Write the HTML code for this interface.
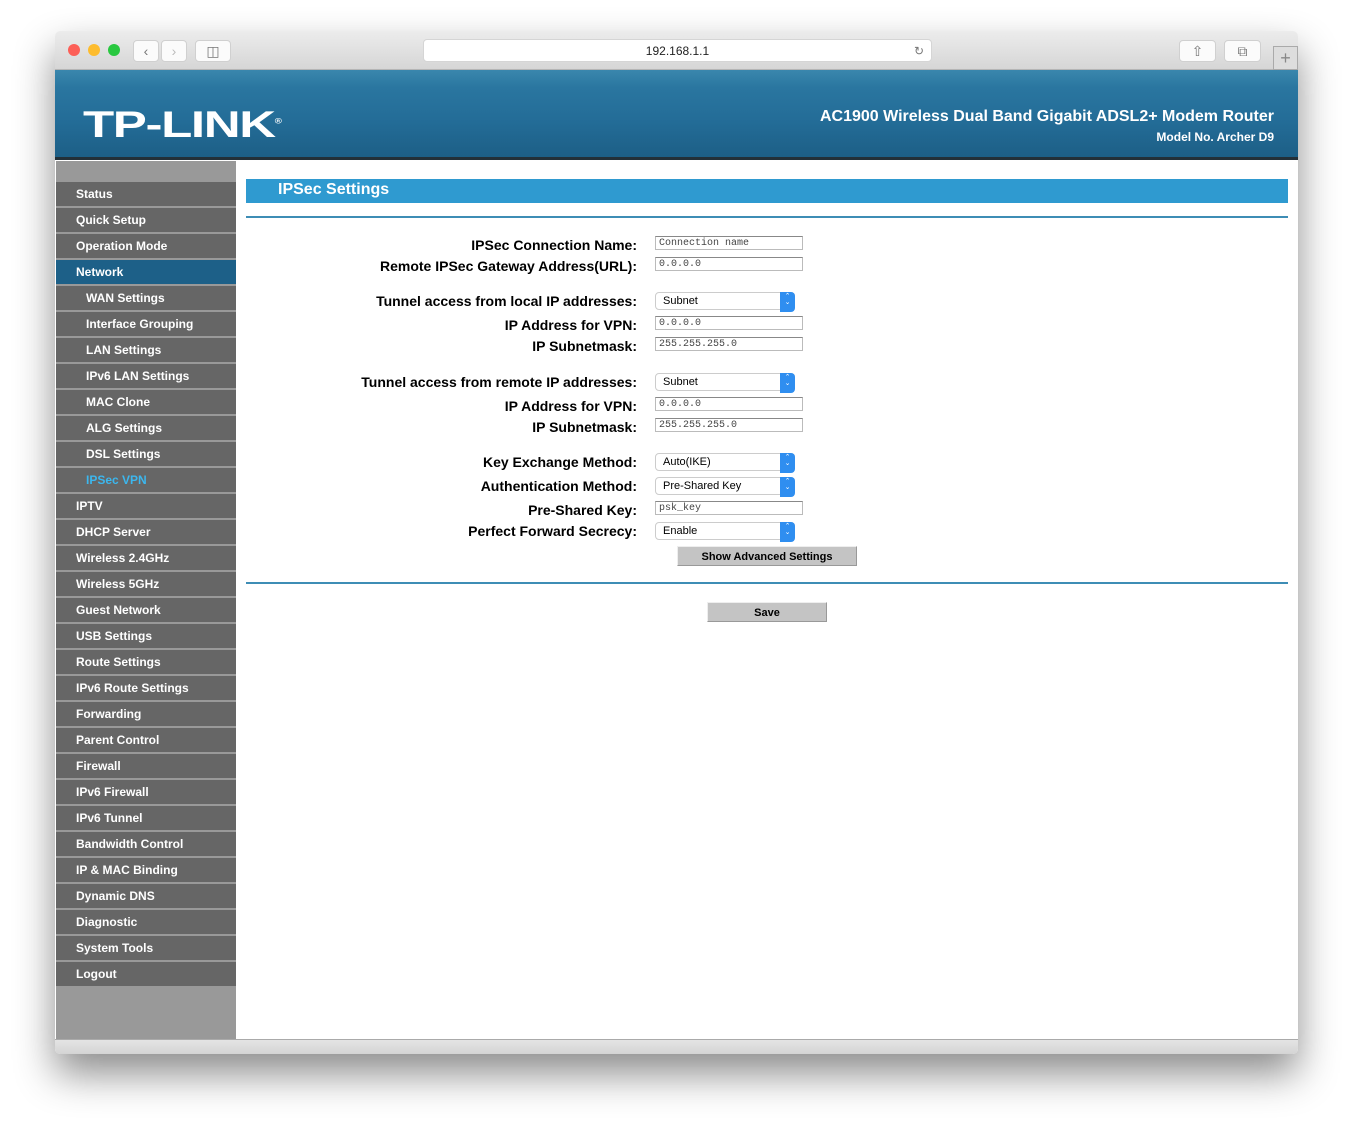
<!DOCTYPE html>
<html><head><style>
*{margin:0;padding:0;box-sizing:border-box}
body{width:1354px;height:1135px;background:#fff;position:relative;font-family:"Liberation Sans",Arial,sans-serif;overflow:hidden}
.win{position:absolute;left:55px;top:31px;width:1243px;height:1023px;border-radius:5px;box-shadow:0 20px 40px rgba(0,0,0,.45);background:#fff;overflow:hidden}
.tb{position:absolute;left:0;top:0;width:100%;height:39px;background:linear-gradient(#ececec,#d6d6d6);border-bottom:1px solid #b5b5b5}
.dot{position:absolute;top:13px;width:12px;height:12px;border-radius:50%}
.btn{position:absolute;top:9px;height:22px;background:#fbfbfb;border-radius:4px;border:1px solid #d0d0d0;color:#777;font-size:14px;text-align:center;line-height:20px}
.url{position:absolute;left:368px;top:8px;width:509px;height:23px;background:#fff;border-radius:4px;border:1px solid #d5d5d5;text-align:center;font-size:12px;line-height:22px;color:#222}
.hdr{position:absolute;left:0;top:39px;width:100%;height:90px;background:linear-gradient(#3a87ad 0,#2a76a0 20%,#236c97 60%,#1d5f86 100%);border-bottom:3px solid #233038}
.logo{position:absolute;left:28px;top:34px;color:#fff;font-weight:bold;font-size:37px;letter-spacing:-1px;transform:scaleX(1.38);transform-origin:left}
.t1{position:absolute;right:24px;top:38px;color:#fff;font-weight:bold;font-size:16px}
.t2{position:absolute;right:24px;top:60px;color:#fff;font-weight:bold;font-size:12px}
.side{position:absolute;left:1px;top:130px;width:180px;height:878px;background:#999}
.side div{position:absolute;left:0;width:180px;height:24px;background:#666;color:#fff;font-weight:bold;font-size:12px;line-height:24px;padding-left:20px}
.side div.s{padding-left:30px}
.side div.a{background:#1d6088}
.side div.c{color:#3cb7ee}
.bb{position:absolute;left:0;top:1008px;width:100%;height:15px;background:linear-gradient(#e4e4e4,#d4d4d4);border-top:1px solid #aaa}
.bar{position:absolute;left:191px;top:148px;width:1042px;height:24px;background:#2f9ad0;color:#fff;font-weight:bold;font-size:16px;line-height:22px;padding-left:32px}
.hl{position:absolute;left:191px;width:1042px;height:2px;background:#3e8db5}
.lb{position:absolute;right:661px;font-weight:bold;font-size:14px;color:#000;white-space:nowrap}
.in{position:absolute;left:600px;width:148px;height:14px;border:1px solid #bbb;border-top-color:#888;font-family:"Liberation Mono",monospace;font-size:10px;line-height:13px;color:#444;padding-left:3px}
.sel{position:absolute;left:600px;width:140px;height:18px;border:1px solid #ccc;border-radius:4px;font-size:11px;line-height:17px;padding-left:7px;background:#fff}
.sel:after{content:"\2303\A\2304";white-space:pre;color:#fff;font-size:7px;line-height:6px;text-align:center;padding-top:2px;position:absolute;right:-1px;top:-1px;width:15px;height:18px;background:#2f8ef0;border-radius:0 4px 4px 0}
.gb{position:absolute;background:#c4c4c4;border:1px solid #999;border-top-color:#eee;border-left-color:#eee;font-weight:bold;font-size:11px;text-align:center;line-height:20px}
</style></head><body>
<div class="win">
<div class="tb">
<div class="dot" style="left:13px;background:#fc5f57"></div>
<div class="dot" style="left:33px;background:#fdbc2e"></div>
<div class="dot" style="left:53px;background:#29c840"></div>
<div class="btn" style="left:78px;width:26px">&#8249;</div>
<div class="btn" style="left:106px;width:26px;color:#bbb">&#8250;</div>
<div class="btn" style="left:140px;width:36px">&#9707;</div>
<div class="url">192.168.1.1<span style="position:absolute;right:7px;color:#777">&#8635;</span></div>
<div class="btn" style="left:1124px;width:37px">&#8679;</div>
<div class="btn" style="left:1169px;width:37px">&#10697;</div>
<div style="position:absolute;left:1218px;top:15px;width:25px;height:24px;border:1px solid #aaa;background:#ddd;color:#888;text-align:center;font-size:18px;line-height:22px">+</div>
</div>
<div class="hdr">
<div class="logo">TP-LINK<sup style="font-size:7px">®</sup></div>
<div class="t1">AC1900 Wireless Dual Band Gigabit ADSL2+ Modem Router</div>
<div class="t2">Model No. Archer D9</div>
</div>
<div class="side">
<div style="top:21px">Status</div>
<div style="top:47px">Quick Setup</div>
<div style="top:73px">Operation Mode</div>
<div class="a" style="top:99px">Network</div>
<div class="s" style="top:125px">WAN Settings</div>
<div class="s" style="top:151px">Interface Grouping</div>
<div class="s" style="top:177px">LAN Settings</div>
<div class="s" style="top:203px">IPv6 LAN Settings</div>
<div class="s" style="top:229px">MAC Clone</div>
<div class="s" style="top:255px">ALG Settings</div>
<div class="s" style="top:281px">DSL Settings</div>
<div class="s c" style="top:307px">IPSec VPN</div>
<div style="top:333px">IPTV</div>
<div style="top:359px">DHCP Server</div>
<div style="top:385px">Wireless 2.4GHz</div>
<div style="top:411px">Wireless 5GHz</div>
<div style="top:437px">Guest Network</div>
<div style="top:463px">USB Settings</div>
<div style="top:489px">Route Settings</div>
<div style="top:515px">IPv6 Route Settings</div>
<div style="top:541px">Forwarding</div>
<div style="top:567px">Parent Control</div>
<div style="top:593px">Firewall</div>
<div style="top:619px">IPv6 Firewall</div>
<div style="top:645px">IPv6 Tunnel</div>
<div style="top:671px">Bandwidth Control</div>
<div style="top:697px">IP &amp; MAC Binding</div>
<div style="top:723px">Dynamic DNS</div>
<div style="top:749px">Diagnostic</div>
<div style="top:775px">System Tools</div>
<div style="top:801px">Logout</div>
</div>
<div class="bar">IPSec Settings</div>
<div class="hl" style="top:185px"></div>
<div class="lb" style="top:206px">IPSec Connection Name:</div>
<div class="in" style="top:205px">Connection name</div>
<div class="lb" style="top:227px">Remote IPSec Gateway Address(URL):</div>
<div class="in" style="top:226px">0.0.0.0</div>
<div class="lb" style="top:262px">Tunnel access from local IP addresses:</div>
<div class="sel" style="top:261px">Subnet</div>
<div class="lb" style="top:286px">IP Address for VPN:</div>
<div class="in" style="top:285px">0.0.0.0</div>
<div class="lb" style="top:307px">IP Subnetmask:</div>
<div class="in" style="top:306px">255.255.255.0</div>
<div class="lb" style="top:343px">Tunnel access from remote IP addresses:</div>
<div class="sel" style="top:342px">Subnet</div>
<div class="lb" style="top:367px">IP Address for VPN:</div>
<div class="in" style="top:366px">0.0.0.0</div>
<div class="lb" style="top:388px">IP Subnetmask:</div>
<div class="in" style="top:387px">255.255.255.0</div>
<div class="lb" style="top:423px">Key Exchange Method:</div>
<div class="sel" style="top:422px">Auto(IKE)</div>
<div class="lb" style="top:447px">Authentication Method:</div>
<div class="sel" style="top:446px">Pre-Shared Key</div>
<div class="lb" style="top:471px">Pre-Shared Key:</div>
<div class="in" style="top:470px">psk_key</div>
<div class="lb" style="top:492px">Perfect Forward Secrecy:</div>
<div class="sel" style="top:491px">Enable</div>
<div class="gb" style="left:622px;top:515px;width:180px;height:20px">Show Advanced Settings</div>
<div class="hl" style="top:551px"></div>
<div class="gb" style="left:652px;top:571px;width:120px;height:20px">Save</div>
<div class="bb"></div>
</div>
</body></html>
